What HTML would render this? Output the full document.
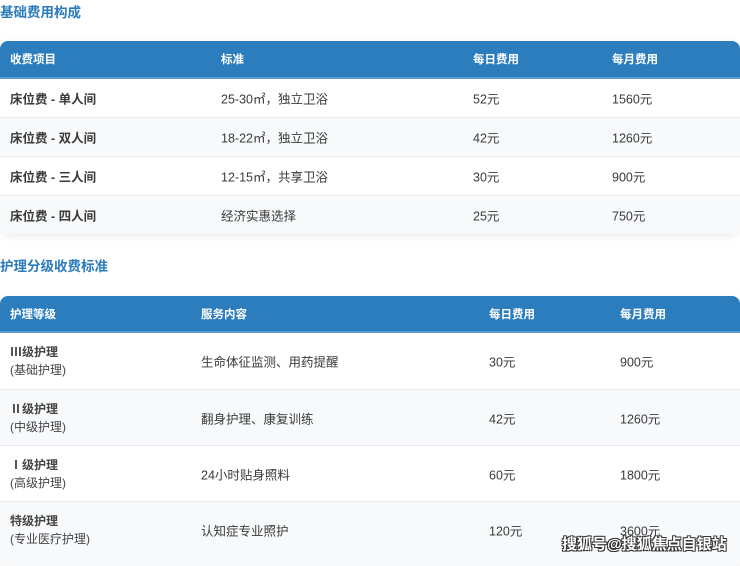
<!DOCTYPE html>
<html><head><meta charset="utf-8"><style>
*{margin:0;padding:0;box-sizing:border-box}
body{width:740px;height:559px;overflow:hidden;background:#fff;font-family:"Liberation Sans","Noto Sans CJK SC",sans-serif;color:#3a3a3a;font-size:12.5px;position:relative}
.t{position:absolute;left:0;color:#2b7bbd;font-weight:bold;font-size:13.5px}
.tb{position:absolute;left:0;width:740px;border-radius:8px 8px 8px 8px;overflow:hidden;box-shadow:0 2px 8px rgba(0,0,0,0.08)}
.h{background:#2c7dbe;color:#fff;font-weight:bold;font-size:11.5px;position:relative;border-bottom:2px solid #5a9bd0}
.r{position:relative;border-bottom:1px solid #e8ecf0}
.r:nth-child(odd){background:#f7f9fb}
.c{position:absolute;top:50%;transform:translateY(-50%);white-space:nowrap}
.b{font-weight:bold}
.s{font-size:12px;color:#444;line-height:18px}
</style></head><body>
<div class="t" style="top:1px">基础费用构成</div>
<div class="tb" style="top:41px;height:193px">
 <div class="h" style="height:38px"><span class="c" style="left:10px">收费项目</span><span class="c" style="left:221px">标准</span><span class="c" style="left:473px">每日费用</span><span class="c" style="left:612px">每月费用</span></div>
 <div class="r" style="height:39px"><span class="c b" style="left:10px">床位费 - 单人间</span><span class="c" style="left:221px">25-30㎡，独立卫浴</span><span class="c" style="left:473px">52元</span><span class="c" style="left:612px">1560元</span></div>
 <div class="r" style="height:39px"><span class="c b" style="left:10px">床位费 - 双人间</span><span class="c" style="left:221px">18-22㎡，独立卫浴</span><span class="c" style="left:473px">42元</span><span class="c" style="left:612px">1260元</span></div>
 <div class="r" style="height:39px"><span class="c b" style="left:10px">床位费 - 三人间</span><span class="c" style="left:221px">12-15㎡，共享卫浴</span><span class="c" style="left:473px">30元</span><span class="c" style="left:612px">900元</span></div>
 <div class="r" style="height:38px;border:0"><span class="c b" style="left:10px">床位费 - 四人间</span><span class="c" style="left:221px">经济实惠选择</span><span class="c" style="left:473px">25元</span><span class="c" style="left:612px">750元</span></div>
</div>
<div class="t" style="top:255px">护理分级收费标准</div>
<div class="tb" style="top:296px;height:270px">
 <div class="h" style="height:37px"><span class="c" style="left:10px">护理等级</span><span class="c" style="left:201px">服务内容</span><span class="c" style="left:489px">每日费用</span><span class="c" style="left:620px">每月费用</span></div>
 <div class="r" style="height:57px"><span class="c s" style="left:10px"><b>Ⅲ级护理</b><br>(基础护理)</span><span class="c" style="left:201px">生命体征监测、用药提醒</span><span class="c" style="left:489px">30元</span><span class="c" style="left:620px">900元</span></div>
 <div class="r" style="height:56px"><span class="c s" style="left:10px"><b>Ⅱ级护理</b><br>(中级护理)</span><span class="c" style="left:201px">翻身护理、康复训练</span><span class="c" style="left:489px">42元</span><span class="c" style="left:620px">1260元</span></div>
 <div class="r" style="height:56px"><span class="c s" style="left:10px"><b>Ⅰ级护理</b><br>(高级护理)</span><span class="c" style="left:201px">24小时贴身照料</span><span class="c" style="left:489px">60元</span><span class="c" style="left:620px">1800元</span></div>
 <div class="r" style="height:64px;border:0"><span class="c s" style="left:10px;top:28px"><b>特级护理</b><br>(专业医疗护理)</span><span class="c" style="left:201px;top:28px">认知症专业照护</span><span class="c" style="left:489px;top:28px">120元</span><span class="c" style="left:620px;top:28px">3600元</span></div>
</div>
<div style="position:absolute;left:562px;top:533px;font-size:15px;font-weight:bold;color:#fff;text-shadow:-1px -1px 0 #333,1px -1px 0 #333,-1px 1px 0 #333,1px 1px 0 #333;white-space:nowrap">搜狐号@搜狐焦点自银站</div>
</body></html>
